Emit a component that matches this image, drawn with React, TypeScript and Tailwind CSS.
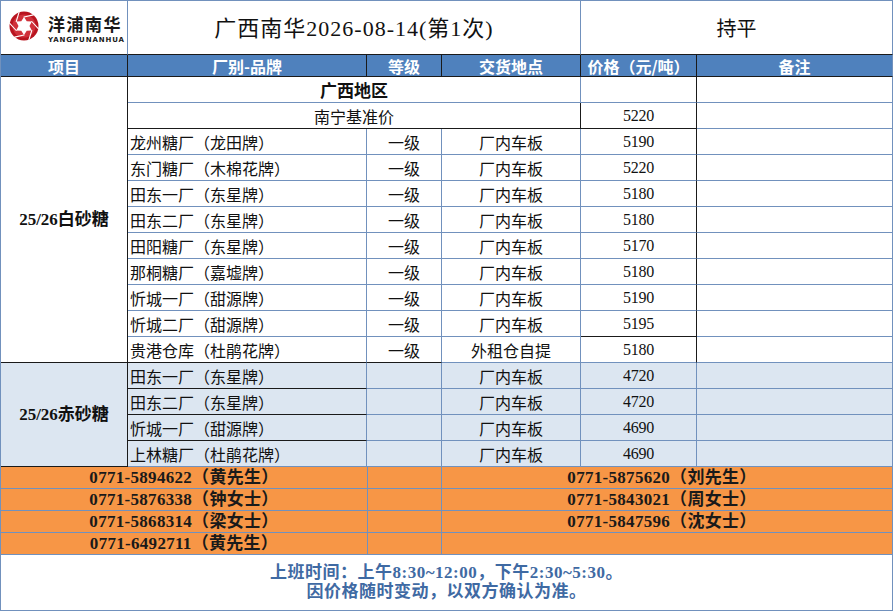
import React from "react";

const base = "border-r border-b border-[#7191bd]";
const nameCls = "flex items-center pl-[2px] text-[16px] text-[#111] font-['Noto_Sans_CJK_SC',sans-serif] whitespace-nowrap";
const centerCls = "flex items-center justify-center text-[16px] text-[#111] font-['Noto_Sans_CJK_SC',sans-serif] whitespace-nowrap";
const numCls = "flex items-center justify-center text-[16px] text-[#111] tracking-[-0.3px] font-['Liberation_Serif','Noto_Sans_CJK_SC',serif]";
const headCls = "flex items-center justify-center bg-[#4f81bd] text-white text-[16px] font-bold font-['Noto_Sans_CJK_SC',sans-serif] border-r border-b border-[#1a1a1a] whitespace-nowrap";
const phoneCls = "flex items-center justify-center text-[17px] tracking-[0.3px] font-bold text-[#1a1a1a] font-['Liberation_Serif','Noto_Sans_CJK_SC',serif] whitespace-nowrap";

const white: [string, string, string, string][] = [
  ["龙州糖厂（龙田牌）", "一级", "厂内车板", "5190"],
  ["东门糖厂（木棉花牌）", "一级", "厂内车板", "5220"],
  ["田东一厂（东星牌）", "一级", "厂内车板", "5180"],
  ["田东二厂（东星牌）", "一级", "厂内车板", "5180"],
  ["田阳糖厂（东星牌）", "一级", "厂内车板", "5170"],
  ["那桐糖厂（嘉墟牌）", "一级", "厂内车板", "5180"],
  ["忻城一厂（甜源牌）", "一级", "厂内车板", "5190"],
  ["忻城二厂（甜源牌）", "一级", "厂内车板", "5195"],
  ["贵港仓库（杜鹃花牌）", "一级", "外租仓自提", "5180"],
];

const red: [string, string, string][] = [
  ["田东一厂（东星牌）", "厂内车板", "4720"],
  ["田东二厂（东星牌）", "厂内车板", "4720"],
  ["忻城一厂（甜源牌）", "厂内车板", "4690"],
  ["上林糖厂（杜鹃花牌）", "厂内车板", "4690"],
];

const phones: [string, string][] = [
  ["0771-5894622（黄先生）", "0771-5875620（刘先生）"],
  ["0771-5876338（钟女士）", "0771-5843021（周女士）"],
  ["0771-5868314（梁女士）", "0771-5847596（沈女士）"],
  ["0771-6492711（黄先生）", ""],
];

function Logo() {
  return (
    <svg width="30" height="30" viewBox="0 0 30 30">
      <circle cx="15" cy="15" r="14.5" fill="#b8141f" />
      <circle cx="15" cy="15" r="11.5" fill="#d0303a" />
      <polygon
        points="15,6 17.75,10.24 22.79,10.5 20.5,15 22.79,19.5 17.75,19.76 15,24 12.25,19.76 7.21,19.5 9.5,15 7.21,10.5 12.25,10.24"
        fill="white"
      />
      <g stroke="white" strokeWidth="1.1" strokeLinecap="round">
        <line x1="15" y1="6" x2="24.32" y2="3.89" />
        <line x1="22.79" y1="10.5" x2="29.28" y2="17.52" />
        <line x1="22.79" y1="19.5" x2="19.96" y2="28.63" />
        <line x1="15" y1="24" x2="5.68" y2="26.11" />
        <line x1="7.21" y1="19.5" x2="0.72" y2="12.48" />
        <line x1="7.21" y1="10.5" x2="10.04" y2="1.37" />
      </g>
    </svg>
  );
}

export default function App() {
  return (
    <div className="w-[894px] h-[611px] bg-white overflow-hidden">
      <div className="grid w-[893px] grid-cols-[127px_239px_75px_139px_116px_1fr] grid-rows-[54px_22px_repeat(15,26px)_repeat(4,22px)_56px] border-t border-l border-[#7191bd]">
        {/* Title row */}
        <div className={`${base} border-b-[#1a1a1a] flex items-center pl-[8px] pb-[3px] gap-[9px]`}>
          <Logo />
          <div className="flex flex-col items-start pt-[4px]">
            <div className="text-[17px] leading-[24px] font-bold text-[#1a1a1a] tracking-[1.5px] font-['Noto_Sans_CJK_SC',sans-serif]">洋浦南华</div>
            <div className="text-[7px] leading-[8px] font-bold text-[#1a1a1a] tracking-[0.9px] font-['DejaVu_Sans',sans-serif]">YANGPUNANHUA</div>
          </div>
        </div>
        <div className={`${base} border-b-[#1a1a1a] col-span-3 flex items-center justify-center pt-[2px] text-[22px] tracking-[1px] text-[#111] font-['Liberation_Serif','Noto_Sans_CJK_SC',serif]`}>
          广西南华2026-08-14(第1次)
        </div>
        <div className={`${base} border-b-[#1a1a1a] col-span-2 flex items-center justify-center text-[20px] text-[#111] font-['Noto_Sans_CJK_SC',sans-serif]`}>
          持平
        </div>

        {/* Header row */}
        <div className={headCls}>项目</div>
        <div className={headCls}>厂别-品牌</div>
        <div className={headCls}>等级</div>
        <div className={headCls}>交货地点</div>
        <div className={headCls}>价格（元/吨）</div>
        <div className={`${headCls} border-r-[#7191bd]`}>备注</div>

        {/* White sugar */}
        <div className={`${base} border-r-[#1a1a1a] border-b-[#1a1a1a] row-span-11 flex items-center justify-center text-[17px] font-bold text-[#111] font-['Liberation_Serif','Noto_Sans_CJK_SC',serif]`}>
          25/26白砂糖
        </div>
        <div className={`${base} col-span-3 flex items-center justify-center text-[17px] font-bold text-[#111] font-['Noto_Sans_CJK_SC',sans-serif]`}>
          广西地区
        </div>
        <div className={`${base} border-r-[#1a1a1a]`} />
        <div className={base} />

        <div className={`${base} border-r-[#1a1a1a] border-b-[#1a1a1a] col-span-3 ${centerCls}`}>南宁基准价</div>
        <div className={`${base} border-r-[#1a1a1a] border-b-[#1a1a1a] ${numCls}`}>5220</div>
        <div className={base} />

        {white.map(([n, g, p, v], i) => (
          <React.Fragment key={i}>
            <div className={`${base} ${i === 8 ? "border-b-[#1a1a1a]" : ""} ${nameCls}`}>{n}</div>
            <div className={`${base} ${i === 8 ? "border-b-[#1a1a1a]" : ""} ${centerCls}`}>{g}</div>
            <div className={`${base} ${centerCls}`}>{p}</div>
            <div className={`${base} border-r-[#1a1a1a] ${i === 7 ? "border-b-[#1a1a1a]" : ""} ${numCls}`}>{v}</div>
            <div className={base} />
          </React.Fragment>
        ))}

        {/* Red sugar */}
        <div className={`${base} border-r-[#1a1a1a] border-b-[#1a1a1a] row-span-4 bg-[#dce6f1] flex items-center justify-center text-[17px] font-bold text-[#111] font-['Liberation_Serif','Noto_Sans_CJK_SC',serif]`}>
          25/26赤砂糖
        </div>
        {red.map(([n, p, v], i) => (
          <React.Fragment key={i}>
            <div className={`${base} ${i < 3 ? "border-b-[#1a1a1a]" : ""} bg-[#dce6f1] ${nameCls}`}>{n}</div>
            <div className={`${base} bg-[#dce6f1]`} />
            <div className={`${base} bg-[#dce6f1] ${centerCls}`}>{p}</div>
            <div className={`${base} bg-[#dce6f1] ${numCls}`}>{v}</div>
            <div className={`${base} bg-[#dce6f1]`} />
          </React.Fragment>
        ))}

        {/* Phones */}
        {phones.map(([a, b], i) => (
          <React.Fragment key={i}>
            <div className={`${base} border-r-0 col-span-2 bg-[#f79646] ${phoneCls}`}>{a}</div>
            <div className={`${base} border-l border-l-[#7191bd] bg-[#f79646]`} />
            <div className={`${base} col-span-3 bg-[#f79646] pr-[10px] ${phoneCls}`}>{b}</div>
          </React.Fragment>
        ))}

        {/* Footer */}
        <div className={`${base} col-span-6 flex flex-col items-center justify-center pb-[2px] text-[17px] leading-[19px] tracking-[0.5px] font-bold text-[#3f6aa3] font-['Liberation_Serif','Noto_Sans_CJK_SC',serif]`}>
          <div>上班时间：上午8:30~12:00，下午2:30~5:30。</div>
          <div>因价格随时变动，以双方确认为准。</div>
        </div>
      </div>
    </div>
  );
}
